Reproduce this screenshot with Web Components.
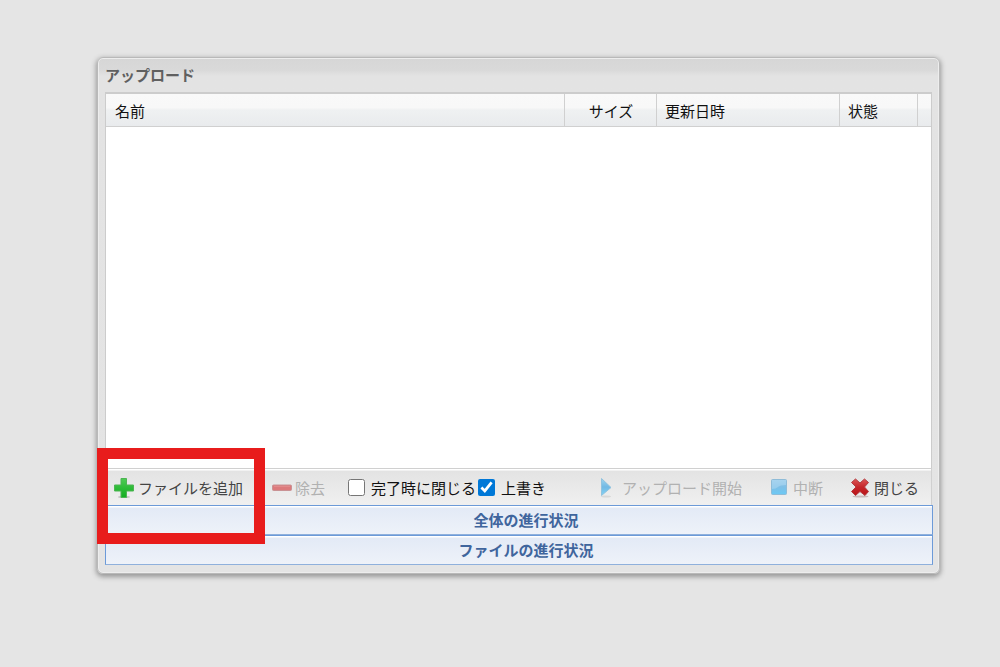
<!DOCTYPE html>
<html lang="ja">
<head>
<meta charset="utf-8">
<title>アップロード</title>
<style>
body { margin: 0; min-height: 100vh; background: #e5e5e5; font: 15px/22px "Noto Sans CJK JP", sans-serif; color: #111; }
</style>
</head>
<body>
<upload-window>
  <span slot="title">アップロード</span>
  <file-grid></file-grid>
  <tool-bar>
    <focus-frame><tool-button icon="add">ファイルを追加</tool-button></focus-frame>
    <tool-button icon="remove" disabled>除去</tool-button>
    <check-group>
      <tool-check>完了時に閉じる</tool-check>
      <tool-check checked>上書き</tool-check>
    </check-group>
    <tool-button slot="end" icon="play" disabled>アップロード開始</tool-button>
    <tool-button slot="end" icon="stop" disabled>中断</tool-button>
    <tool-button slot="end" icon="close">閉じる</tool-button>
  </tool-bar>
  <progress-row>全体の進行状況</progress-row>
  <progress-row>ファイルの進行状況</progress-row>
</upload-window>
<script>
const define = (name, html, setup) => customElements.define(name, class extends HTMLElement {
  connectedCallback() {
    if (this.shadowRoot) return;
    this.attachShadow({ mode: "open" }).innerHTML = html;
    if (setup) setup(this, this.shadowRoot);
  }
});

define("upload-window", `
<style>
:host { display: block; padding: 57px 60px 40px 97px; }
section { border: 1px solid #b9b9b9; border-radius: 6px; padding: 6px 6px 8px 7px;
  background: linear-gradient(#d6d6d6 0, #d9d9d9 12px, #e3e3e3 18px, #e4e4e4 100%);
  box-shadow: inset 0 0 0 1px #ededed, 0 2px 5px 1px #999; }
h1 { margin: 0; font-size: 15px; line-height: 22px; font-weight: 700; color: #606060; padding-bottom: 6px; }
</style>
<section><h1><slot name="title"></slot></h1><slot></slot></section>`);

define("file-grid", `
<style>
:host { display: block; border: 1px solid #ccc; border-top-width: 2px; border-bottom: 0; background: #fff; min-height: 374px; margin-right: 1px; }
table { width: 100%; table-layout: fixed; border-collapse: separate; border-spacing: 0; }
th { box-sizing: border-box; height: 33px; padding: 2px 8px 0 9px; font-weight: 400; text-align: left;
  background: linear-gradient(#f9f9f9 0, #f8f8f8 42%, #eff1f2 50%, #e9ebed 100%);
  border-right: 1px solid #d0d0d0; border-bottom: 1px solid #d0d0d0; }
.size { width: 92px; text-align: center; }
.date { width: 183px; padding-left: 8px; }
.state { width: 78px; padding-left: 8px; }
.rest { width: 13px; padding: 0; border-right: 0; }
</style>
<table><thead><tr><th>名前</th><th class="size">サイズ</th><th class="date">更新日時</th><th class="state">状態</th><th class="rest"></th></tr></thead><tbody></tbody></table>`);

define("tool-bar", `
<style>
:host { display: flex; justify-content: space-between; align-items: center; box-sizing: border-box; height: 37px; margin-right: 1px; padding: 1px 12px 0 8px;
  border: 1px solid #d0d0d0; border-bottom: 0; background: linear-gradient(#fff 0, #fff 1px, #e3e3e3 2px, #f0f0f0 100%); }
div { display: flex; align-items: center; }
.start { gap: 28px; }
.end { gap: 27px; }
</style>
<div class="start"><slot></slot></div><div class="end"><slot name="end"></slot></div>`);

define("focus-frame", `
<style>
:host { display: block; position: relative; }
i { position: absolute; inset: -29px -22px -45px -17px; border: 11px solid #e81c1c; pointer-events: none; z-index: 2; }
</style>
<slot></slot><i></i>`);

const icons = {
  add: `<defs><linearGradient id="g" x2="0" y2="1"><stop stop-color="#4fcb55"/><stop offset=".5" stop-color="#2dbb37"/><stop offset="1" stop-color="#14ad22"/></linearGradient></defs>
    <ellipse cx="10" cy="19" rx="6" ry="1" fill="#bbb"/>
    <path d="M7 .5h5.500v6.500H19.500v6H12.500v6.500H7v-6.500H.5V7H7z" fill="url(#g)" stroke="#4db553" stroke-linejoin="round"/>`,
  remove: `<rect x="1.500" y="7" width="19" height="5.500" rx="1" fill="#dc7a7c" stroke="#c99294"/><path d="M3 8.500h16" stroke="#e28a8b"/>`,
  play: `<defs><linearGradient id="g" x2="0" y2="1"><stop stop-color="#9fd5ef"/><stop offset=".5" stop-color="#72b9e4"/><stop offset="1" stop-color="#83d3f5"/></linearGradient></defs>
    <ellipse cx="8" cy="18.500" rx="5" ry="1" fill="#d8d8d8"/><path d="M3.500 .5 13 9.500 3.500 17.500z" fill="url(#g)" stroke="#91c3df" stroke-linejoin="round"/>`,
  stop: `<defs><linearGradient id="g" x2="0" y2="1"><stop stop-color="#9bcbea"/><stop offset=".5" stop-color="#7fbfe6"/><stop offset="1" stop-color="#6bc9f5"/></linearGradient></defs>
    <rect x="2.500" y="1.500" width="15" height="15" rx="1" fill="url(#g)" stroke="#8fbcd8"/><path d="M3 2h14v5q-6 0-8 2t-6 2z" fill="#b3dcf3" opacity=".5"/>`,
  close: `<defs><linearGradient id="g" x2="0" y2="1"><stop stop-color="#dc5454"/><stop offset=".5" stop-color="#c4262a"/><stop offset="1" stop-color="#bb1418"/></linearGradient></defs>
    <ellipse cx="10.500" cy="18.500" rx="8" ry="1" fill="#c8bcbc"/>
    <path d="M5.500 1 10 5 14.500 1 18.500 4.500 14.500 9 18.500 13.500 15 17.500 10 13.500 5.500 17.500 1.500 13.500 6 9 1.500 4.500z" fill="url(#g)" stroke="#b23c40" stroke-linejoin="round"/>`
};

define("tool-button", `
<style>
:host { display: block; }
button { display: flex; align-items: center; gap: 4px; margin: 0; padding: 0; border: 0; background: none; font: inherit; color: #444; white-space: nowrap; }
button:disabled { color: #b1b1b1; }
svg { display: block; width: 20px; height: 20px; overflow: visible; }
</style>
<button type="button"><svg viewBox="0 0 20 20" aria-hidden="true"></svg><slot></slot></button>`, (host, root) => {
  root.querySelector("svg").innerHTML = icons[host.getAttribute("icon")];
  root.querySelector("button").disabled = host.hasAttribute("disabled");
});

define("check-group", `
<style>:host { display: flex; gap: 2px; margin-left: -5px; }</style><slot></slot>`);

define("tool-check", `
<style>
:host { display: block; }
label { display: flex; align-items: center; gap: 6px; white-space: nowrap; }
input { width: 17px; height: 17px; margin: 0; accent-color: #0078d7; }
</style>
<label><input type="checkbox"><span><slot></slot></span></label>`, (host, root) => {
  root.querySelector("input").checked = host.hasAttribute("checked");
});

define("progress-row", `
<style>
:host { display: block; box-sizing: border-box; height: 30px; padding-left: 14px; border: 1px solid #6c9ad8; border-bottom-color: #8fb0dc;
  background: linear-gradient(#fff 0, #fff 1px, #e3eaf6 2px, #eef2f9 100%);
  text-align: center; font-weight: 700; line-height: 27px; color: #3f659d; }
</style>
<slot></slot>`);
</script>
</body>
</html>
